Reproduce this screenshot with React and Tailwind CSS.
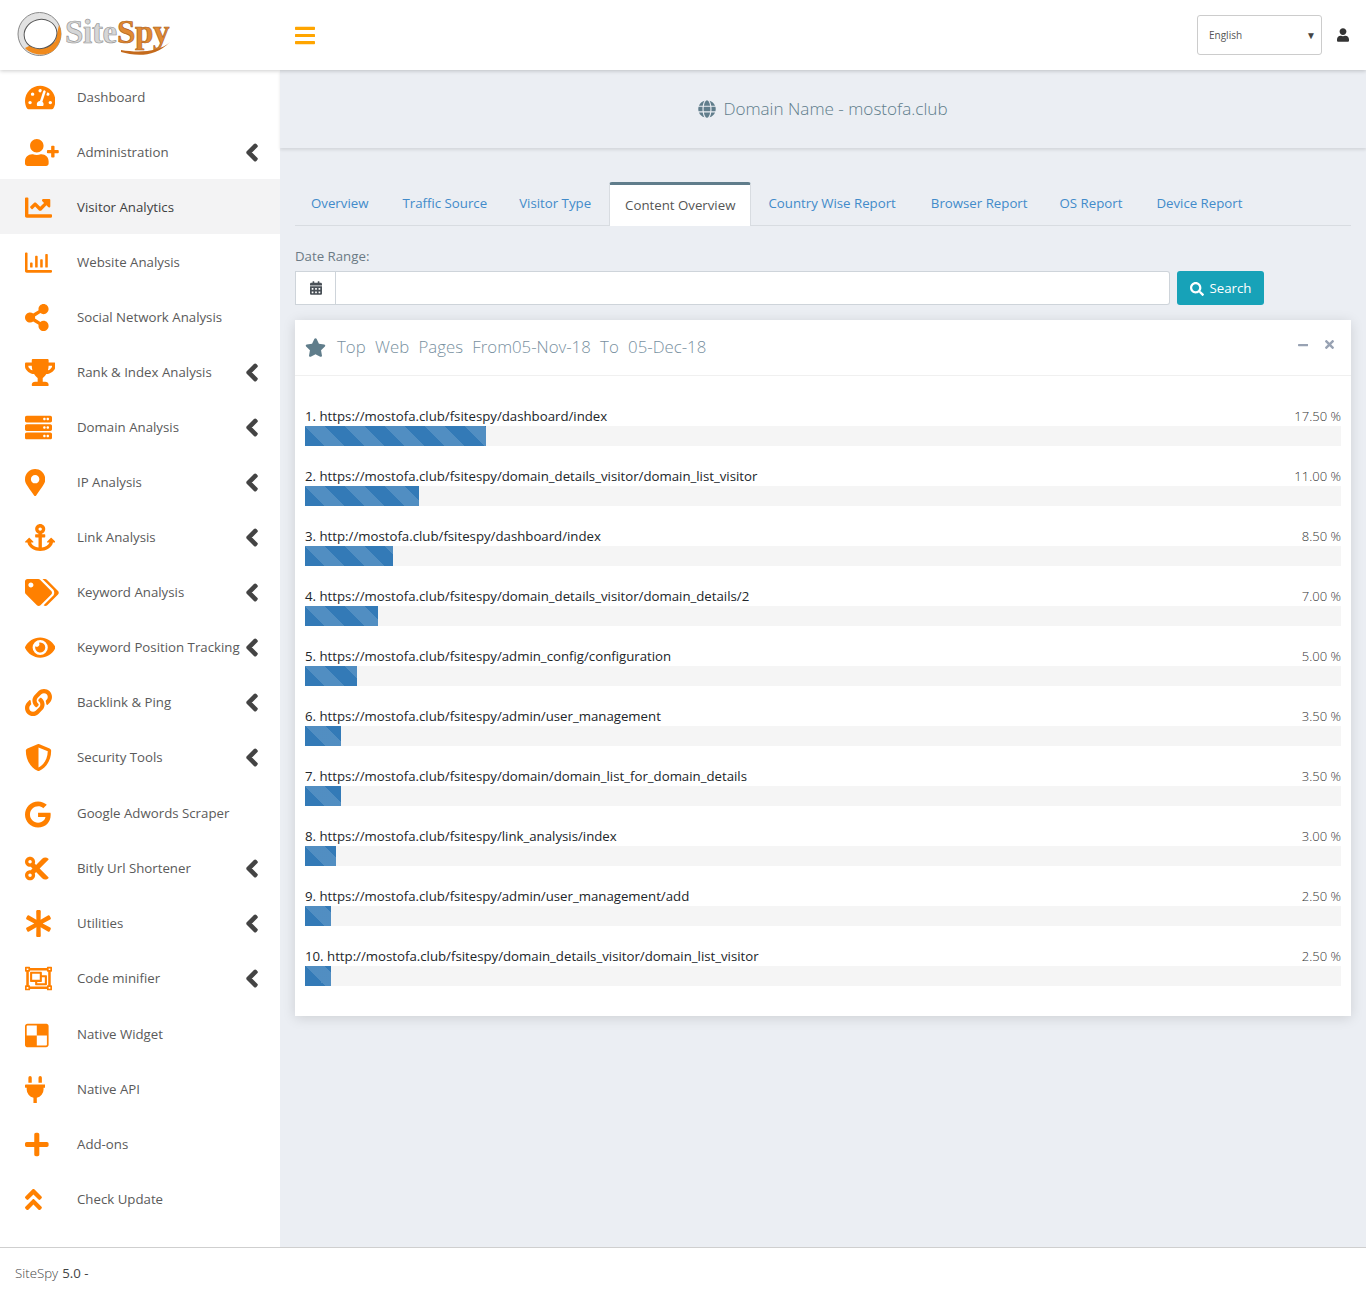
import React from "react";
import {
  FaTachometerAlt, FaUserPlus, FaChartLine, FaRegChartBar, FaShareAlt, FaTrophy, FaServer, FaMapMarkerAlt,
  FaAnchor, FaTags, FaEye, FaLink, FaShieldAlt, FaGoogle, FaCut, FaAsterisk, FaRegObjectGroup, FaDelicious,
  FaPlug, FaPlus, FaAngleDoubleUp, FaChevronLeft, FaBars, FaUser, FaGlobe, FaStar, FaSearch, FaCalendarAlt, FaMinus, FaTimes,
} from "react-icons/fa";

const menu = [
  [FaTachometerAlt, "Dashboard", false, "", "w-[30.4px]"],
  [FaUserPlus, "Administration", true, "", "w-[33.75px]"],
  [FaChartLine, "Visitor Analytics", false, "active", "w-[27px]"],
  [FaRegChartBar, "Website Analysis", false, "", "w-[27px]"],
  [FaShareAlt, "Social Network Analysis", false, "", "w-[23.6px]"],
  [FaTrophy, "Rank & Index Analysis", true, "", "w-[30.4px]"],
  [FaServer, "Domain Analysis", true, "", "w-[27px]"],
  [FaMapMarkerAlt, "IP Analysis", true, "", "w-[20.25px]"],
  [FaAnchor, "Link Analysis", true, "", "w-[30.4px]"],
  [FaTags, "Keyword Analysis", true, "", "w-[33.75px]"],
  [FaEye, "Keyword Position Tracking", true, "", "w-[30.4px]"],
  [FaLink, "Backlink & Ping", true, "", "w-[27px]"],
  [FaShieldAlt, "Security Tools", true, "", "w-[27px]"],
  [FaGoogle, "Google Adwords Scraper", false, "tall", "w-[25.7px]"],
  [FaCut, "Bitly Url Shortener", true, "", "w-[23.6px]"],
  [FaAsterisk, "Utilities", true, "", "w-[27px]"],
  [FaRegObjectGroup, "Code minifier", true, "", "w-[27px]"],
  [FaDelicious, "Native Widget", false, "tall", "w-[23.6px]"],
  [FaPlug, "Native API", false, "", "w-[20.25px]"],
  [FaPlus, "Add-ons", false, "", "w-[23.6px]"],
  [FaAngleDoubleUp, "Check Update", false, "", "w-[16.9px]"],
];

const tabs = [
  ["Overview", "mr-[4px]"],
  ["Traffic Source", "mr-[2px]"],
  ["Visitor Type", "mr-[3px]"],
  ["Content Overview", "mr-[2px]"],
  ["Country Wise Report", "mr-[5px]"],
  ["Browser Report", "mr-[2px]"],
  ["OS Report", "mr-[4px]"],
  ["Device Report", "mr-[4px]"],
];

const pages = [
  ["1. https://mostofa.club/fsitespy/dashboard/index", 17.5],
  ["2. https://mostofa.club/fsitespy/domain_details_visitor/domain_list_visitor", 11],
  ["3. http://mostofa.club/fsitespy/dashboard/index", 8.5],
  ["4. https://mostofa.club/fsitespy/domain_details_visitor/domain_details/2", 7],
  ["5. https://mostofa.club/fsitespy/admin_config/configuration", 5],
  ["6. https://mostofa.club/fsitespy/admin/user_management", 3.5],
  ["7. https://mostofa.club/fsitespy/domain/domain_list_for_domain_details", 3.5],
  ["8. https://mostofa.club/fsitespy/link_analysis/index", 3],
  ["9. https://mostofa.club/fsitespy/admin/user_management/add", 2.5],
  ["10. http://mostofa.club/fsitespy/domain_details_visitor/domain_list_visitor", 2.5],
];

function Logo() {
  return (
    <svg width="156" height="48" viewBox="0 0 156 48" className="block mt-[2px]">
      <circle cx="22.5" cy="22" r="21.5" fill="#e2e2e2" stroke="#8a8a8a" strokeWidth="1" />
      <path d="M8 36 C14 43 30 46 38 37 C44 30 46 21 42 13 L38 30 L12 34 Z" fill="#f08a1d" />
      <ellipse cx="23.5" cy="22" rx="16.5" ry="14.5" transform="rotate(-15 23.5 22)" fill="#fff" stroke="#555" strokeWidth="1" />
      <text x="48" y="31" fontFamily="'Liberation Serif', serif" fontSize="33" fontWeight="700" fill="#d6d6d6" stroke="#909090" strokeWidth="0.6" letterSpacing="-0.3">Site</text>
      <text x="100" y="31" fontFamily="'Liberation Serif', serif" fontSize="33" fontWeight="700" fill="#e08a33" stroke="#a8591a" strokeWidth="0.6" letterSpacing="-0.3">Spy</text>
      <path d="M104 40 C118 44 138 46 153 30 C142 40 122 41 104 38 Z" fill="#c46a1c" />
    </svg>
  );
}

function Row({ item }) {
  const [Icon, label, arrow, kind, width] = item;
  const state =
    kind === "active"
      ? "h-[55px] -mt-px mb-px pt-[2px] bg-[#f3f3f4] text-[#3f3f3f]"
      : kind === "tall"
      ? "h-[56px] pt-[2px] text-[#5a5a5a]"
      : "h-[55px] text-[#5a5a5a]";
  return (
    <div className={`flex items-center pl-[25px] ${state}`}>
      <span className="w-[52px] shrink-0 text-[#ff8000]">
        <Icon className={`h-[27px] ${width}`} />
      </span>
      <span className="text-[13.25px] whitespace-nowrap">{label}</span>
      {arrow && (
        <span className="ml-auto mr-[22px] text-[#444]">
          <FaChevronLeft className="h-[19px] w-[12px]" stroke="currentColor" strokeWidth="45" />
        </span>
      )}
    </div>
  );
}

function PageRow({ url, pct }) {
  return (
    <div className="mb-[20px]">
      <div className="flex justify-between h-[20px] pt-[2px] items-center text-[13.22px] text-[#212529]">
        <span>{url}</span>
        <span className="font-light text-[13px] text-[#333]">{pct.toFixed(2)} %</span>
      </div>
      <div className="h-[20px] bg-[#f5f5f5]">
        <div
          className="h-full bg-[#337ab7] bg-[linear-gradient(45deg,rgba(255,255,255,0.15)_25%,transparent_25%,transparent_50%,rgba(255,255,255,0.15)_50%,rgba(255,255,255,0.15)_75%,transparent_75%,transparent)] [background-size:40px_40px]"
          style={{ width: `${pct}%` }}
        />
      </div>
    </div>
  );
}

export default function App() {
  return (
    <div className="w-[1366px] h-[1298px] flex flex-col bg-white font-['Open_Sans',sans-serif] overflow-hidden">
      <header className="relative z-20 h-[70px] shrink-0 flex items-center bg-white shadow-[0_1px_4px_rgba(0,0,0,0.2)]">
        <div className="w-[280px] pl-[17px] shrink-0">
          <Logo />
        </div>
        <span className="ml-[15px] text-[#ffa500]">
          <FaBars className="h-[23px] w-[20px]" />
        </span>
        <div className="ml-auto mr-[17px] flex items-center">
          <div className="w-[125px] h-[40px] border border-[#ccc] rounded-[3px] flex items-center justify-between pl-[11px] pr-[5px] text-[10px] text-[#555]">
            <span>English</span>
            <span className="text-[10px] text-[#444]">▼</span>
          </div>
          <span className="ml-[15px] text-[#333]">
            <FaUser className="h-[14px] w-[12px]" />
          </span>
        </div>
      </header>

      <div className="flex flex-1 min-h-0">
        <aside className="w-[280px] shrink-0 bg-white">
          {menu.map((m) => (
            <Row key={m[1]} item={m} />
          ))}
        </aside>

        <main className="flex-1 bg-[#ebeef3]">
          <div className="h-[78px] flex items-center justify-center bg-[#ebeef3] shadow-[0_2px_3px_rgba(0,0,0,0.1)] text-[#607d8b] text-[17.1px] font-light">
            <FaGlobe className="mr-[7px] h-[18px] w-[18px]" />
            <span>Domain Name - mostofa.club</span>
          </div>

          <div className="pt-[34px] px-[15px]">
            <div className="flex h-[44px] pl-px border-b border-[#d8dce1]">
              {tabs.map(([t, mr]) =>
                t === "Content Overview" ? (
                  <div key={t} className={`h-[44px] ${mr} px-[15px] flex items-center bg-white border-t-[3px] border-x border-t-[#607d8b] border-x-[#d8dce1] rounded-t-[3px] text-[13.25px] text-[#555]`}>
                    {t}
                  </div>
                ) : (
                  <div key={t} className={`px-[15px] ${mr} flex items-center text-[13.25px] text-[#428bca]`}>
                    {t}
                  </div>
                )
              )}
            </div>

            <div className="mt-[21px] pt-[2px] h-[18px] flex items-center text-[13.25px] text-[#6b7a85]">Date Range:</div>
            <div className="mt-[6px] flex h-[34px]">
              <div className="w-[41px] flex items-center justify-center bg-white border border-[#ced4da] text-[#495057]">
                <FaCalendarAlt className="h-[14px] w-[12px]" />
              </div>
              <div className="w-[834px] bg-white border-y border-r border-[#ced4da] rounded-r-[3px]" />
              <button className="ml-[7px] w-[87px] pt-[1px] flex items-center justify-center gap-[6px] bg-[#17a2b8] text-white text-[13.25px] rounded-[3px]">
                <FaSearch className="h-[14px] w-[14px]" />
                Search
              </button>
            </div>

            <section className="mt-[15px] h-[696px] bg-white shadow-[0_2px_12px_rgba(0,0,0,0.13)]">
              <div className="h-[56px] flex items-center px-[10px] border-b border-[#f0f0f0]">
                <FaStar className="text-[#607d8b] h-[19px] w-[21px] mr-[11px]" />
                <span className="mb-[2px] text-[16.8px] font-light text-[#7890a0] whitespace-pre [word-spacing:5px]">Top Web Pages From05-Nov-18 To 05-Dec-18</span>
                <FaMinus className="ml-auto mb-[6px] text-[#98a2b3] h-[12px] w-[10.5px]" />
                <FaTimes className="ml-[17px] mr-[7px] mb-[6px] text-[#98a2b3] h-[13px] w-[9px]" />
              </div>
              <div className="pt-[30px] px-[10px]">
                {pages.map(([u, p]) => (
                  <PageRow key={u} url={u} pct={p} />
                ))}
              </div>
            </section>
          </div>
        </main>
      </div>

      <footer className="h-[51px] pt-[2px] shrink-0 flex items-center pl-[15px] bg-white border-t border-[#cfcfcf] text-[13.25px] text-[#444]">
        <span className="font-light">SiteSpy</span>
        <span className="ml-[4px]">5.0 -</span>
      </footer>
    </div>
  );
}
